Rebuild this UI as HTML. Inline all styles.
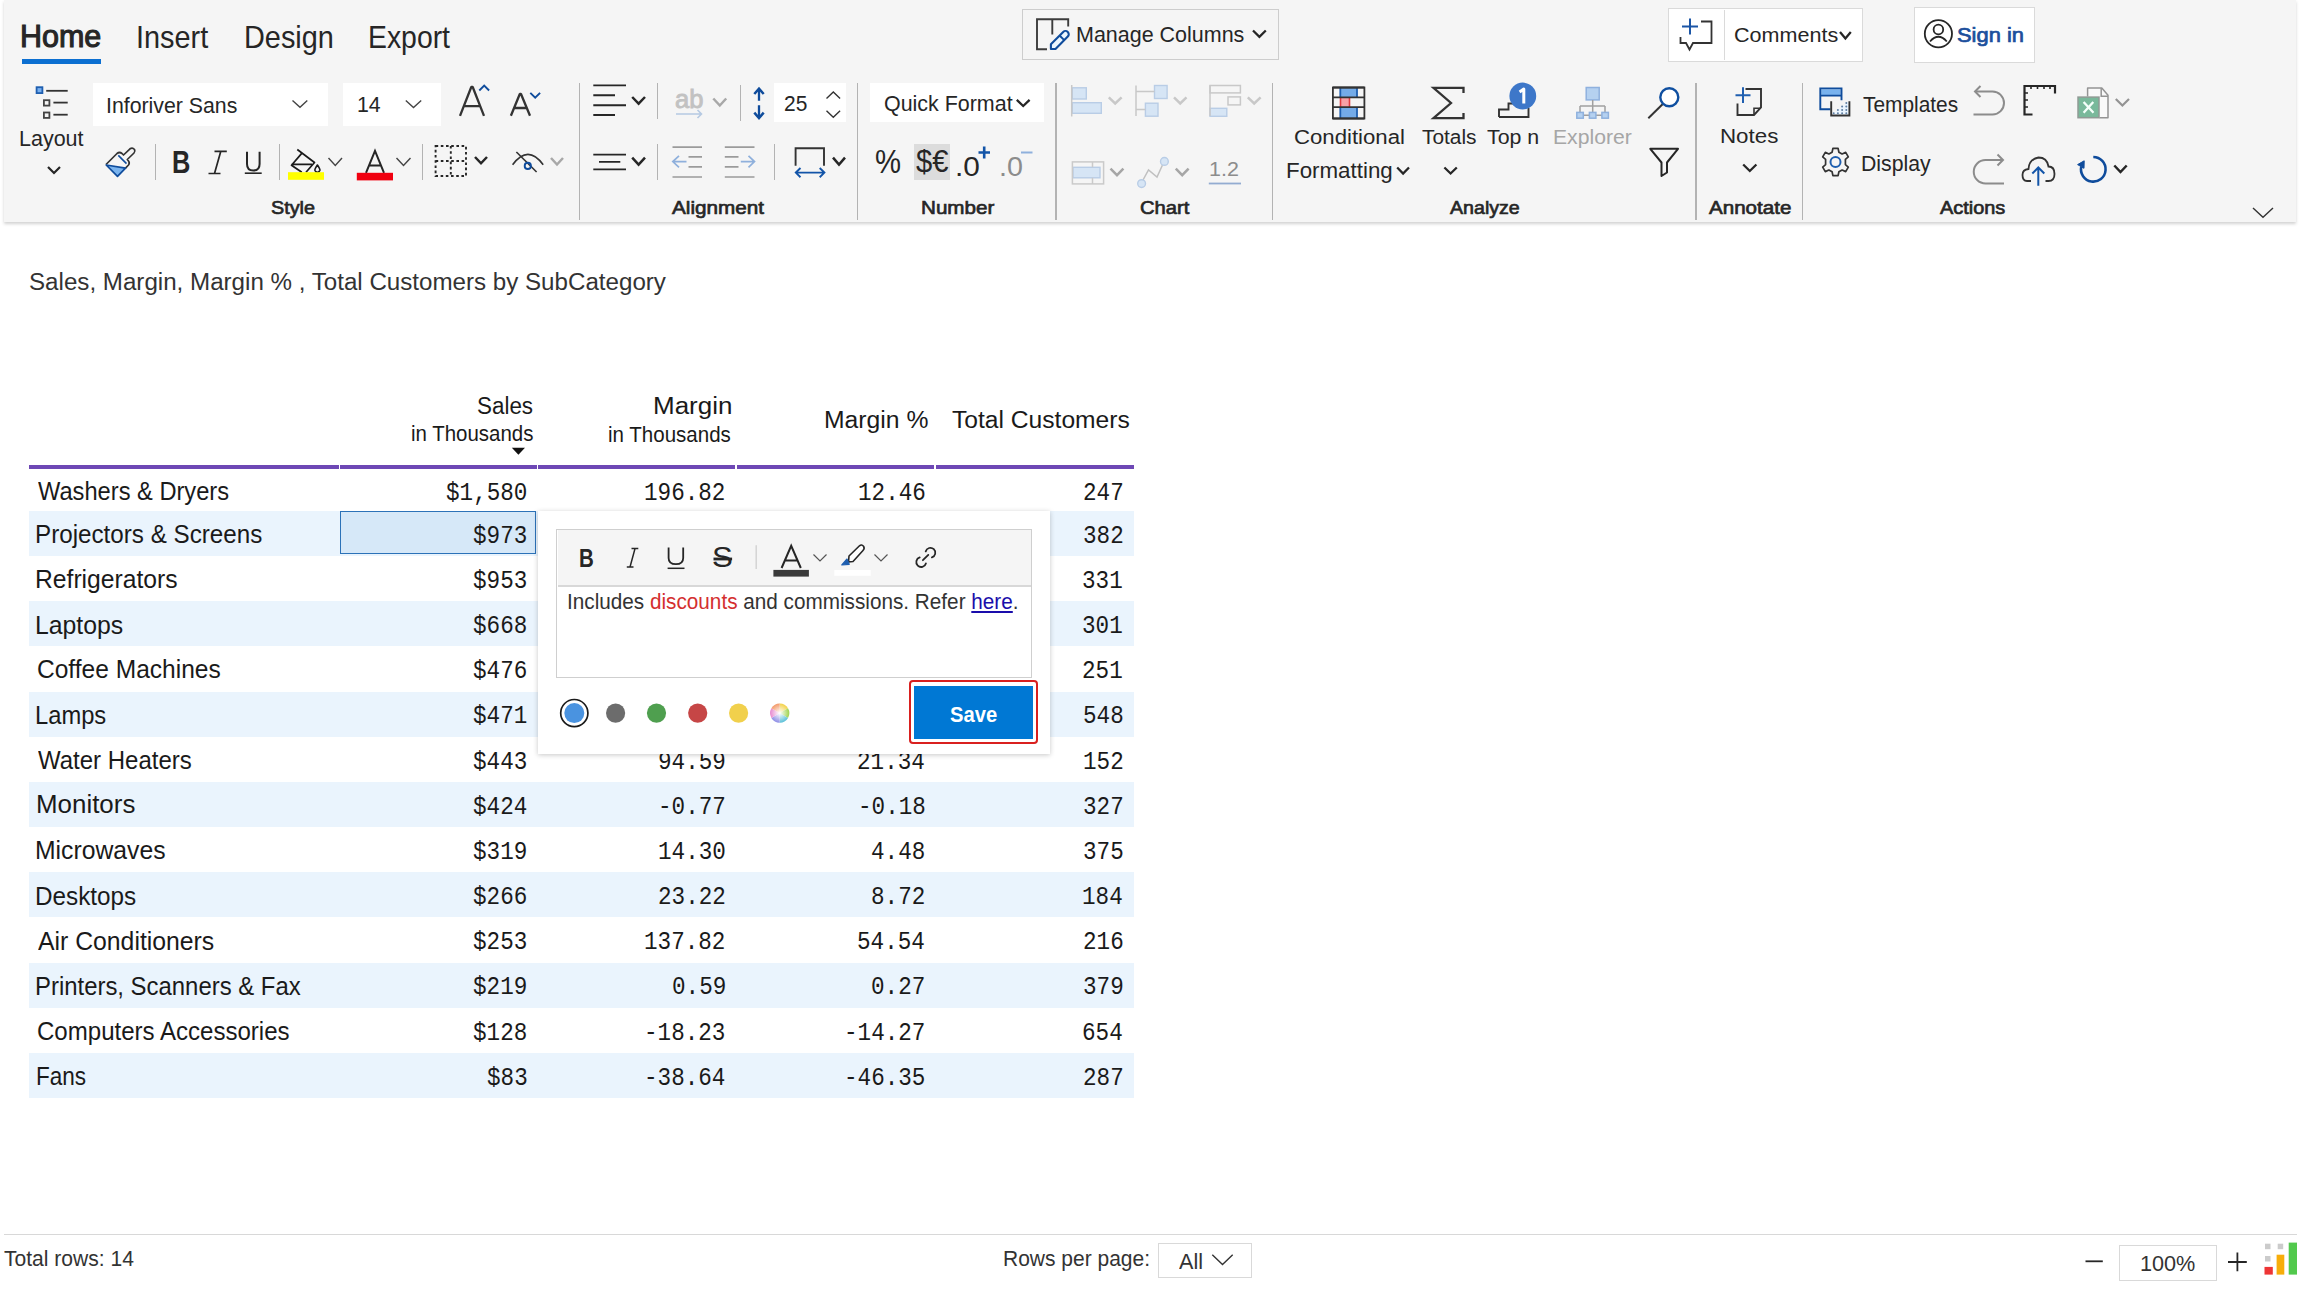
<!DOCTYPE html>
<html><head><meta charset="utf-8">
<style>
html,body{margin:0;padding:0;width:2304px;height:1289px;overflow:hidden;background:#fff;font-family:"Liberation Sans",sans-serif;}
.t{position:absolute;white-space:nowrap;line-height:1;transform-origin:0 0;}
.abs{position:absolute;}
#ribbon{position:absolute;left:4px;top:0;width:2292px;height:222px;background:#f5f5f5;box-shadow:0 2px 3px rgba(0,0,0,0.18);}
.sep{position:absolute;width:1.3px;background:#b3b3b3;}
.row{position:absolute;left:29px;width:1105px;height:45.17px;}
.alt{background:#eaf4fd;}
</style></head><body>
<div id="ribbon"></div>
<!-- tab underline -->
<div class="abs" style="left:22px;top:59px;width:79px;height:5px;background:#0c6fd1"></div>
<!-- top buttons -->
<div class="abs" style="left:1021.5px;top:9px;width:255px;height:48.5px;border:1.3px solid #cdcdcd;background:#f5f5f5"></div>
<div class="abs" style="left:1667.5px;top:8px;width:193px;height:51.5px;border:1.3px solid #dadada;background:#fff"></div>
<div class="abs" style="left:1723.5px;top:10px;width:1.3px;height:50px;background:#dadada"></div>
<div class="abs" style="left:1913.5px;top:6.8px;width:119.5px;height:54.5px;border:1.3px solid #dadada;background:#fff"></div>
<!-- input boxes -->
<div class="abs" style="left:93px;top:83px;width:235px;height:43px;background:#fff"></div>
<div class="abs" style="left:342.5px;top:83.2px;width:98.5px;height:42.4px;background:#fff"></div>
<div class="abs" style="left:774px;top:82.6px;width:71.6px;height:39px;background:#fff"></div>
<div class="abs" style="left:870px;top:83px;width:174.3px;height:39px;background:#fff"></div>
<div class="abs" style="left:914px;top:144.2px;width:36px;height:35.6px;background:#dcdcdc"></div>
<!-- separators -->
<div class="sep" style="left:578.8px;top:83px;height:137px"></div>
<div class="sep" style="left:856.9px;top:83px;height:137px"></div>
<div class="sep" style="left:1055.4px;top:83px;height:137px"></div>
<div class="sep" style="left:1272px;top:83px;height:137px"></div>
<div class="sep" style="left:1695.4px;top:83px;height:137px"></div>
<div class="sep" style="left:1802px;top:83px;height:137px"></div>
<div class="sep" style="left:154.7px;top:144px;height:36px"></div>
<div class="sep" style="left:278.7px;top:144px;height:36px"></div>
<div class="sep" style="left:421.9px;top:144px;height:36px"></div>
<div class="sep" style="left:656.8px;top:82.6px;height:36px"></div>
<div class="sep" style="left:739.9px;top:85px;height:36px"></div>
<div class="sep" style="left:656.8px;top:144px;height:36px"></div>
<div class="sep" style="left:773.6px;top:144px;height:36px"></div>
<!-- table rows -->
<div class="row alt" style="top:510.90px;height:45.17px"></div>
<div class="row alt" style="top:601.24px;height:45.17px"></div>
<div class="row alt" style="top:691.58px;height:45.17px"></div>
<div class="row alt" style="top:781.92px;height:45.17px"></div>
<div class="row alt" style="top:872.26px;height:45.17px"></div>
<div class="row alt" style="top:962.60px;height:45.17px"></div>
<div class="row alt" style="top:1052.94px;height:45.17px"></div>
<!-- purple header line -->
<div class="abs" style="left:29px;top:465.2px;width:309.5px;height:3.9px;background:#6e48b5"></div>
<div class="abs" style="left:339.8px;top:465.2px;width:196.8px;height:3.9px;background:#6e48b5"></div>
<div class="abs" style="left:538.2px;top:465.2px;width:196.8px;height:3.9px;background:#6e48b5"></div>
<div class="abs" style="left:736.9px;top:465.2px;width:197.3px;height:3.9px;background:#6e48b5"></div>
<div class="abs" style="left:935.8px;top:465.2px;width:198.2px;height:3.9px;background:#6e48b5"></div>
<!-- selected cell -->
<div class="abs" style="left:340.1px;top:511.2px;width:193.8px;height:41px;border:1.8px solid #2c72b8;background:#d6e8f8"></div>
<!-- sort triangle -->
<svg class="abs" style="left:0;top:0" width="2304" height="1289">
<polygon points="511.8,447.8 525,447.8 518.4,454.8" fill="#111"/>
</svg>
<div class="t" style="left:20.15px;top:21.36px;font-size:31.15px;transform:scaleX(0.9781);color:#262626;font-weight:400;font-family:'Liberation Sans';-webkit-text-stroke:1.09px #262626">Home</div>
<div class="t" style="left:135.97px;top:22.76px;font-size:30.72px;transform:scaleX(0.9397);color:#262626;font-weight:400;font-family:'Liberation Sans'">Insert</div>
<div class="t" style="left:243.74px;top:22.76px;font-size:30.72px;transform:scaleX(0.9399);color:#262626;font-weight:400;font-family:'Liberation Sans'">Design</div>
<div class="t" style="left:367.89px;top:22.76px;font-size:30.72px;transform:scaleX(0.9236);color:#262626;font-weight:400;font-family:'Liberation Sans'">Export</div>
<div class="t" style="left:1076.31px;top:23.95px;font-size:21.62px;transform:scaleX(0.9938);color:#262626;font-weight:400;font-family:'Liberation Sans'">Manage Columns</div>
<div class="t" style="left:1733.89px;top:24.03px;font-size:21.05px;transform:scaleX(1.0244);color:#262626;font-weight:400;font-family:'Liberation Sans'">Comments</div>
<div class="t" style="left:1957.32px;top:24.03px;font-size:21.05px;transform:scaleX(1.0397);color:#1c4f9c;font-weight:400;font-family:'Liberation Sans';-webkit-text-stroke:0.74px #1c4f9c">Sign in</div>
<div class="t" style="left:106.35px;top:94.89px;font-size:22.33px;transform:scaleX(0.9535);color:#262626;font-weight:400;font-family:'Liberation Sans'">Inforiver Sans</div>
<div class="t" style="left:356.92px;top:94.49px;font-size:21.62px;transform:scaleX(0.9857);color:#262626;font-weight:400;font-family:'Liberation Sans'">14</div>
<div class="t" style="left:19.43px;top:128.67px;font-size:21.33px;transform:scaleX(1.0072);color:#262626;font-weight:400;font-family:'Liberation Sans'">Layout</div>
<div class="t" style="left:271.38px;top:198.84px;font-size:18.49px;transform:scaleX(1.0702);color:#262626;font-weight:400;font-family:'Liberation Sans';-webkit-text-stroke:0.65px #262626">Style</div>
<div class="t" style="left:784.01px;top:92.99px;font-size:22.33px;transform:scaleX(0.9375);color:#262626;font-weight:400;font-family:'Liberation Sans'">25</div>
<div class="t" style="left:672.10px;top:198.84px;font-size:18.77px;transform:scaleX(1.1025);color:#262626;font-weight:400;font-family:'Liberation Sans';-webkit-text-stroke:0.66px #262626">Alignment</div>
<div class="t" style="left:884.12px;top:92.55px;font-size:21.19px;transform:scaleX(1.0114);color:#262626;font-weight:400;font-family:'Liberation Sans'">Quick Format</div>
<div class="t" style="left:920.73px;top:198.60px;font-size:18.77px;transform:scaleX(1.0987);color:#262626;font-weight:400;font-family:'Liberation Sans';-webkit-text-stroke:0.66px #262626">Number</div>
<div class="t" style="left:171.82px;top:147.42px;font-size:30.58px;transform:scaleX(0.8297);color:#262626;font-weight:700;font-family:'Liberation Sans'">B</div>
<div class="t" style="left:674.97px;top:86.69px;font-size:25.46px;transform:scaleX(1.0027);color:#c2c2c2;font-weight:400;font-family:'Liberation Sans';-webkit-text-stroke:0.89px #c2c2c2">ab</div>
<div class="t" style="left:875.08px;top:146.08px;font-size:32.57px;transform:scaleX(0.8985);color:#262626;font-weight:400;font-family:'Liberation Sans'">%</div>
<div class="t" style="left:915.76px;top:146.20px;font-size:31.72px;transform:scaleX(0.9198);color:#262626;font-weight:400;font-family:'Liberation Sans'">$€</div>
<div class="t" style="left:955.01px;top:151.58px;font-size:28.30px;transform:scaleX(1.0541);color:#262626;font-weight:400;font-family:'Liberation Sans'">.0</div>
<div class="t" style="left:998.98px;top:151.58px;font-size:28.30px;transform:scaleX(1.0145);color:#8c8c8c;font-weight:400;font-family:'Liberation Sans'">.0</div>
<div class="t" style="left:1209.12px;top:158.47px;font-size:21.05px;transform:scaleX(1.0193);color:#8c8c8c;font-weight:400;font-family:'Liberation Sans'">1.2</div>
<div class="t" style="left:1139.50px;top:198.60px;font-size:18.77px;transform:scaleX(1.0771);color:#262626;font-weight:400;font-family:'Liberation Sans';-webkit-text-stroke:0.66px #262626">Chart</div>
<div class="t" style="left:1293.64px;top:126.25px;font-size:21.05px;transform:scaleX(1.0534);color:#262626;font-weight:400;font-family:'Liberation Sans'">Conditional</div>
<div class="t" style="left:1286.27px;top:159.57px;font-size:22.04px;transform:scaleX(1.0138);color:#262626;font-weight:400;font-family:'Liberation Sans'">Formatting</div>
<div class="t" style="left:1421.67px;top:126.25px;font-size:21.05px;transform:scaleX(0.9920);color:#262626;font-weight:400;font-family:'Liberation Sans'">Totals</div>
<div class="t" style="left:1487.23px;top:126.25px;font-size:21.05px;transform:scaleX(1.0136);color:#262626;font-weight:400;font-family:'Liberation Sans'">Top n</div>
<div class="t" style="left:1553.35px;top:126.25px;font-size:21.05px;transform:scaleX(1.0048);color:#a6a6a6;font-weight:400;font-family:'Liberation Sans'">Explorer</div>
<div class="t" style="left:1450.00px;top:198.84px;font-size:18.77px;transform:scaleX(1.0450);color:#262626;font-weight:400;font-family:'Liberation Sans';-webkit-text-stroke:0.66px #262626">Analyze</div>
<div class="t" style="left:1720.37px;top:125.91px;font-size:20.34px;transform:scaleX(1.0983);color:#262626;font-weight:400;font-family:'Liberation Sans'">Notes</div>
<div class="t" style="left:1708.66px;top:198.84px;font-size:18.49px;transform:scaleX(1.1130);color:#262626;font-weight:400;font-family:'Liberation Sans';-webkit-text-stroke:0.65px #262626">Annotate</div>
<div class="t" style="left:1862.57px;top:93.67px;font-size:22.33px;transform:scaleX(0.9343);color:#262626;font-weight:400;font-family:'Liberation Sans'">Templates</div>
<div class="t" style="left:1861.34px;top:152.89px;font-size:22.33px;transform:scaleX(0.9515);color:#262626;font-weight:400;font-family:'Liberation Sans'">Display</div>
<div class="t" style="left:1940.44px;top:198.84px;font-size:18.49px;transform:scaleX(1.0767);color:#262626;font-weight:400;font-family:'Liberation Sans';-webkit-text-stroke:0.65px #262626">Actions</div>
<div class="t" style="left:29.13px;top:271.25px;font-size:23.18px;transform:scaleX(1.0419);color:#333333;font-weight:400;font-family:'Liberation Sans'">Sales, Margin, Margin % , Total Customers by SubCategory</div>
<div class="t" style="left:476.85px;top:394.59px;font-size:23.18px;transform:scaleX(0.9671);color:#1a1a1a;font-weight:400;font-family:'Liberation Sans'">Sales</div>
<div class="t" style="left:410.63px;top:423.21px;font-size:21.76px;transform:scaleX(0.9401);color:#1a1a1a;font-weight:400;font-family:'Liberation Sans'">in Thousands</div>
<div class="t" style="left:652.98px;top:393.97px;font-size:24.75px;transform:scaleX(1.0496);color:#1a1a1a;font-weight:400;font-family:'Liberation Sans'">Margin</div>
<div class="t" style="left:608.28px;top:424.31px;font-size:21.76px;transform:scaleX(0.9435);color:#1a1a1a;font-weight:400;font-family:'Liberation Sans'">in Thousands</div>
<div class="t" style="left:824.17px;top:407.89px;font-size:24.46px;transform:scaleX(1.0110);color:#1a1a1a;font-weight:400;font-family:'Liberation Sans'">Margin %</div>
<div class="t" style="left:951.72px;top:407.89px;font-size:24.46px;transform:scaleX(1.0064);color:#1a1a1a;font-weight:400;font-family:'Liberation Sans'">Total Customers</div>
<div class="t" style="left:38.12px;top:478.98px;font-size:24.89px;transform:scaleX(0.9512);color:#1a1a1a;font-weight:400;font-family:'Liberation Sans'">Washers &amp; Dryers</div>
<div class="t" style="left:35.43px;top:522.18px;font-size:24.89px;transform:scaleX(0.9729);color:#1a1a1a;font-weight:400;font-family:'Liberation Sans'">Projectors &amp; Screens</div>
<div class="t" style="left:35.39px;top:566.96px;font-size:24.89px;transform:scaleX(0.9920);color:#1a1a1a;font-weight:400;font-family:'Liberation Sans'">Refrigerators</div>
<div class="t" style="left:35.39px;top:612.53px;font-size:24.89px;transform:scaleX(0.9967);color:#1a1a1a;font-weight:400;font-family:'Liberation Sans'">Laptops</div>
<div class="t" style="left:36.97px;top:657.31px;font-size:24.89px;transform:scaleX(0.9866);color:#1a1a1a;font-weight:400;font-family:'Liberation Sans'">Coffee Machines</div>
<div class="t" style="left:35.46px;top:702.89px;font-size:24.89px;transform:scaleX(0.9539);color:#1a1a1a;font-weight:400;font-family:'Liberation Sans'">Lamps</div>
<div class="t" style="left:38.12px;top:748.27px;font-size:24.89px;transform:scaleX(0.9646);color:#1a1a1a;font-weight:400;font-family:'Liberation Sans'">Water Heaters</div>
<div class="t" style="left:36.10px;top:792.45px;font-size:24.89px;transform:scaleX(1.0415);color:#1a1a1a;font-weight:400;font-family:'Liberation Sans'">Monitors</div>
<div class="t" style="left:35.39px;top:838.02px;font-size:24.89px;transform:scaleX(0.9941);color:#1a1a1a;font-weight:400;font-family:'Liberation Sans'">Microwaves</div>
<div class="t" style="left:35.43px;top:883.60px;font-size:24.89px;transform:scaleX(0.9756);color:#1a1a1a;font-weight:400;font-family:'Liberation Sans'">Desktops</div>
<div class="t" style="left:38.12px;top:928.58px;font-size:24.89px;transform:scaleX(0.9959);color:#1a1a1a;font-weight:400;font-family:'Liberation Sans'">Air Conditioners</div>
<div class="t" style="left:35.46px;top:973.96px;font-size:24.89px;transform:scaleX(0.9608);color:#1a1a1a;font-weight:400;font-family:'Liberation Sans'">Printers, Scanners &amp; Fax</div>
<div class="t" style="left:37.00px;top:1018.74px;font-size:24.89px;transform:scaleX(0.9667);color:#1a1a1a;font-weight:400;font-family:'Liberation Sans'">Computers Accessories</div>
<div class="t" style="left:35.58px;top:1063.51px;font-size:24.89px;transform:scaleX(0.9064);color:#1a1a1a;font-weight:400;font-family:'Liberation Sans'">Fans</div>
<div class="t" style="left:4.35px;top:1248.01px;font-size:22.19px;transform:scaleX(0.9494);color:#333333;font-weight:400;font-family:'Liberation Sans'">Total rows: 14</div>
<div class="t" style="left:1002.80px;top:1248.27px;font-size:21.76px;transform:scaleX(0.9652);color:#333333;font-weight:400;font-family:'Liberation Sans'">Rows per page:</div>
<div class="t" style="left:1178.56px;top:1251.29px;font-size:21.62px;transform:scaleX(0.9989);color:#333333;font-weight:400;font-family:'Liberation Sans'">All</div>
<div class="t" style="left:2140.31px;top:1251.59px;font-size:22.76px;transform:scaleX(0.9514);color:#333333;font-weight:400;font-family:'Liberation Sans'">100%</div>
<div class="t" style="left:445.79px;top:479.72px;font-size:26.05px;transform:scaleX(0.8681);color:#1a1a1a;font-weight:400;font-family:'Liberation Mono'">$1,580</div>
<div class="t" style="left:644.45px;top:479.72px;font-size:26.05px;transform:scaleX(0.8681);color:#1a1a1a;font-weight:400;font-family:'Liberation Mono'">196.82</div>
<div class="t" style="left:857.56px;top:479.72px;font-size:26.05px;transform:scaleX(0.8681);color:#1a1a1a;font-weight:400;font-family:'Liberation Mono'">12.46</div>
<div class="t" style="left:1082.85px;top:479.72px;font-size:26.05px;transform:scaleX(0.8681);color:#1a1a1a;font-weight:400;font-family:'Liberation Mono'">247</div>
<div class="t" style="left:472.93px;top:522.72px;font-size:26.05px;transform:scaleX(0.8681);color:#1a1a1a;font-weight:400;font-family:'Liberation Mono'">$973</div>
<div class="t" style="left:1082.85px;top:522.72px;font-size:26.05px;transform:scaleX(0.8681);color:#1a1a1a;font-weight:400;font-family:'Liberation Mono'">382</div>
<div class="t" style="left:472.93px;top:567.89px;font-size:26.05px;transform:scaleX(0.8681);color:#1a1a1a;font-weight:400;font-family:'Liberation Mono'">$953</div>
<div class="t" style="left:1082.15px;top:567.89px;font-size:26.05px;transform:scaleX(0.8681);color:#1a1a1a;font-weight:400;font-family:'Liberation Mono'">331</div>
<div class="t" style="left:472.93px;top:613.06px;font-size:26.05px;transform:scaleX(0.8681);color:#1a1a1a;font-weight:400;font-family:'Liberation Mono'">$668</div>
<div class="t" style="left:1082.15px;top:613.06px;font-size:26.05px;transform:scaleX(0.8681);color:#1a1a1a;font-weight:400;font-family:'Liberation Mono'">301</div>
<div class="t" style="left:472.93px;top:658.23px;font-size:26.05px;transform:scaleX(0.8681);color:#1a1a1a;font-weight:400;font-family:'Liberation Mono'">$476</div>
<div class="t" style="left:1082.15px;top:658.23px;font-size:26.05px;transform:scaleX(0.8681);color:#1a1a1a;font-weight:400;font-family:'Liberation Mono'">251</div>
<div class="t" style="left:472.58px;top:703.40px;font-size:26.05px;transform:scaleX(0.8681);color:#1a1a1a;font-weight:400;font-family:'Liberation Mono'">$471</div>
<div class="t" style="left:1082.50px;top:703.40px;font-size:26.05px;transform:scaleX(0.8681);color:#1a1a1a;font-weight:400;font-family:'Liberation Mono'">548</div>
<div class="t" style="left:472.93px;top:748.57px;font-size:26.05px;transform:scaleX(0.8681);color:#1a1a1a;font-weight:400;font-family:'Liberation Mono'">$443</div>
<div class="t" style="left:658.02px;top:748.57px;font-size:26.05px;transform:scaleX(0.8681);color:#1a1a1a;font-weight:400;font-family:'Liberation Mono'">94.59</div>
<div class="t" style="left:857.21px;top:748.57px;font-size:26.05px;transform:scaleX(0.8681);color:#1a1a1a;font-weight:400;font-family:'Liberation Mono'">21.34</div>
<div class="t" style="left:1082.85px;top:748.57px;font-size:26.05px;transform:scaleX(0.8681);color:#1a1a1a;font-weight:400;font-family:'Liberation Mono'">152</div>
<div class="t" style="left:472.58px;top:793.74px;font-size:26.05px;transform:scaleX(0.8681);color:#1a1a1a;font-weight:400;font-family:'Liberation Mono'">$424</div>
<div class="t" style="left:658.02px;top:793.74px;font-size:26.05px;transform:scaleX(0.8681);color:#1a1a1a;font-weight:400;font-family:'Liberation Mono'">-0.77</div>
<div class="t" style="left:857.56px;top:793.74px;font-size:26.05px;transform:scaleX(0.8681);color:#1a1a1a;font-weight:400;font-family:'Liberation Mono'">-0.18</div>
<div class="t" style="left:1082.85px;top:793.74px;font-size:26.05px;transform:scaleX(0.8681);color:#1a1a1a;font-weight:400;font-family:'Liberation Mono'">327</div>
<div class="t" style="left:473.28px;top:838.91px;font-size:26.05px;transform:scaleX(0.8681);color:#1a1a1a;font-weight:400;font-family:'Liberation Mono'">$319</div>
<div class="t" style="left:657.66px;top:838.91px;font-size:26.05px;transform:scaleX(0.8681);color:#1a1a1a;font-weight:400;font-family:'Liberation Mono'">14.30</div>
<div class="t" style="left:871.13px;top:838.91px;font-size:26.05px;transform:scaleX(0.8681);color:#1a1a1a;font-weight:400;font-family:'Liberation Mono'">4.48</div>
<div class="t" style="left:1082.50px;top:838.91px;font-size:26.05px;transform:scaleX(0.8681);color:#1a1a1a;font-weight:400;font-family:'Liberation Mono'">375</div>
<div class="t" style="left:472.93px;top:884.08px;font-size:26.05px;transform:scaleX(0.8681);color:#1a1a1a;font-weight:400;font-family:'Liberation Mono'">$266</div>
<div class="t" style="left:658.02px;top:884.08px;font-size:26.05px;transform:scaleX(0.8681);color:#1a1a1a;font-weight:400;font-family:'Liberation Mono'">23.22</div>
<div class="t" style="left:871.48px;top:884.08px;font-size:26.05px;transform:scaleX(0.8681);color:#1a1a1a;font-weight:400;font-family:'Liberation Mono'">8.72</div>
<div class="t" style="left:1082.15px;top:884.08px;font-size:26.05px;transform:scaleX(0.8681);color:#1a1a1a;font-weight:400;font-family:'Liberation Mono'">184</div>
<div class="t" style="left:472.93px;top:929.25px;font-size:26.05px;transform:scaleX(0.8681);color:#1a1a1a;font-weight:400;font-family:'Liberation Mono'">$253</div>
<div class="t" style="left:644.45px;top:929.25px;font-size:26.05px;transform:scaleX(0.8681);color:#1a1a1a;font-weight:400;font-family:'Liberation Mono'">137.82</div>
<div class="t" style="left:857.21px;top:929.25px;font-size:26.05px;transform:scaleX(0.8681);color:#1a1a1a;font-weight:400;font-family:'Liberation Mono'">54.54</div>
<div class="t" style="left:1082.50px;top:929.25px;font-size:26.05px;transform:scaleX(0.8681);color:#1a1a1a;font-weight:400;font-family:'Liberation Mono'">216</div>
<div class="t" style="left:473.28px;top:974.42px;font-size:26.05px;transform:scaleX(0.8681);color:#1a1a1a;font-weight:400;font-family:'Liberation Mono'">$219</div>
<div class="t" style="left:671.58px;top:974.42px;font-size:26.05px;transform:scaleX(0.8681);color:#1a1a1a;font-weight:400;font-family:'Liberation Mono'">0.59</div>
<div class="t" style="left:871.48px;top:974.42px;font-size:26.05px;transform:scaleX(0.8681);color:#1a1a1a;font-weight:400;font-family:'Liberation Mono'">0.27</div>
<div class="t" style="left:1082.85px;top:974.42px;font-size:26.05px;transform:scaleX(0.8681);color:#1a1a1a;font-weight:400;font-family:'Liberation Mono'">379</div>
<div class="t" style="left:472.93px;top:1019.59px;font-size:26.05px;transform:scaleX(0.8681);color:#1a1a1a;font-weight:400;font-family:'Liberation Mono'">$128</div>
<div class="t" style="left:644.09px;top:1019.59px;font-size:26.05px;transform:scaleX(0.8681);color:#1a1a1a;font-weight:400;font-family:'Liberation Mono'">-18.23</div>
<div class="t" style="left:844.35px;top:1019.59px;font-size:26.05px;transform:scaleX(0.8681);color:#1a1a1a;font-weight:400;font-family:'Liberation Mono'">-14.27</div>
<div class="t" style="left:1082.15px;top:1019.59px;font-size:26.05px;transform:scaleX(0.8681);color:#1a1a1a;font-weight:400;font-family:'Liberation Mono'">654</div>
<div class="t" style="left:486.50px;top:1064.76px;font-size:26.05px;transform:scaleX(0.8681);color:#1a1a1a;font-weight:400;font-family:'Liberation Mono'">$83</div>
<div class="t" style="left:643.74px;top:1064.76px;font-size:26.05px;transform:scaleX(0.8681);color:#1a1a1a;font-weight:400;font-family:'Liberation Mono'">-38.64</div>
<div class="t" style="left:843.99px;top:1064.76px;font-size:26.05px;transform:scaleX(0.8681);color:#1a1a1a;font-weight:400;font-family:'Liberation Mono'">-46.35</div>
<div class="t" style="left:1082.85px;top:1064.76px;font-size:26.05px;transform:scaleX(0.8681);color:#1a1a1a;font-weight:400;font-family:'Liberation Mono'">287</div>
<!-- popup -->
<div class="abs" style="left:538px;top:510.8px;width:511.6px;height:243.3px;background:#fff;box-shadow:0 1px 5px rgba(0,0,0,0.22)"></div>
<div class="abs" style="left:556.4px;top:529px;width:474px;height:146.5px;border:1.3px solid #cfcfcf;background:#fff"></div>
<div class="abs" style="left:557.7px;top:530.3px;width:473px;height:55px;background:#f5f5f5;border-bottom:2.2px solid #d8d8d8"></div>
<div class="abs" style="left:909.4px;top:680.3px;width:124.6px;height:60px;border:2px solid #d9201f;border-radius:4px"></div>
<div class="abs" style="left:914.3px;top:685.7px;width:118.4px;height:53.8px;background:#0078d4"></div>
<div class="t p" style="left:567.38px;top:591.45px;font-size:22.19px;transform:scaleX(0.9340);color:#333333;font-weight:400;font-family:'Liberation Sans'">Includes <span style="color:#d42f2f">discounts</span> and commissions. Refer <span style="color:#1a0dab;text-decoration:underline">here</span>.</div>
<div class="t p" style="left:949.89px;top:704.05px;font-size:21.76px;transform:scaleX(0.9287);color:#ffffff;font-weight:700;font-family:'Liberation Sans'">Save</div>
<div class="t p" style="left:578.63px;top:545.75px;font-size:25.32px;transform:scaleX(0.8094);color:#262626;font-weight:700;font-family:'Liberation Sans'">B</div>
<div class="t p" style="left:712.26px;top:543.26px;font-size:28.87px;transform:scaleX(1.0788);color:#262626;font-weight:400;font-family:'Liberation Sans'">S</div>
<!-- footer -->
<div class="abs" style="left:4px;top:1233.8px;width:2293px;height:1.6px;background:#d8d8d8"></div>
<div class="abs" style="left:1158.3px;top:1243.2px;width:91.6px;height:32.7px;border:1.3px solid #d9d9d9"></div>
<div class="abs" style="left:2119.2px;top:1245.1px;width:95.8px;height:33.5px;border:1.3px solid #d9d9d9"></div>
<svg class="abs" style="left:0;top:0;pointer-events:none" width="2304" height="1289" viewBox="0 0 2304 1289" fill="none" stroke-linecap="butt">
<!-- ===== Top buttons ===== -->
<!-- manage columns icon -->
<path d="M1047,49.2 H1037 V19.2 H1068.2 V26.5" stroke="#3c3c3c" stroke-width="1.9"/>
<path d="M1052.3,19.2 V34.5" stroke="#3c3c3c" stroke-width="1.9"/>
<path d="M1050.9,49 V44.2 L1063.2,31.9 A3.25 3.25 0 0 1 1067.8,36.5 L1055.5,49 Z" fill="#eaf6ff" stroke="#0f4c9c" stroke-width="2.1" stroke-linejoin="round"/>
<path d="M1059.6,35.5 L1064.2,40.1" stroke="#0f4c9c" stroke-width="1.9"/>
<polyline points="1253,30.5 1259.4,36.8 1265.8,30.5" stroke="#262626" stroke-width="2.3"/>
<!-- comments icon -->
<path d="M1682,26.5 H1698 M1690,18.6 V34.5" stroke="#1b55a6" stroke-width="2"/>
<path d="M1701,21.5 H1711.5 V43 H1693 L1689.5,49.5 L1686,43 H1680.5 V37" stroke="#333" stroke-width="1.8"/>
<polyline points="1840,32 1845.4,38.4 1850.8,32" stroke="#262626" stroke-width="2.3"/>
<!-- user icon -->
<circle cx="1938.4" cy="33.8" r="13.6" stroke="#262626" stroke-width="1.8"/>
<circle cx="1938.4" cy="29.5" r="4.8" stroke="#262626" stroke-width="1.8"/>
<path d="M1930,41.5 Q1938.4,32 1946.8,41.5" stroke="#262626" stroke-width="1.8"/>

<!-- ===== Style group ===== -->
<rect x="36.6" y="87.2" width="5.8" height="5.9" fill="#76aff0" stroke="#1f5fb0" stroke-width="1.8"/>
<path d="M46.2,90.8 H67.7" stroke="#333" stroke-width="1.8"/>
<rect x="43.9" y="100.2" width="5.5" height="5.4" stroke="#444" stroke-width="1.8"/>
<path d="M53.4,102.6 H67.7" stroke="#333" stroke-width="1.8"/>
<rect x="43.9" y="112.5" width="5.5" height="5.4" stroke="#444" stroke-width="1.8"/>
<path d="M53.4,114.7 H67.7" stroke="#333" stroke-width="1.8"/>
<polyline points="48,167 54,173 60,167" stroke="#262626" stroke-width="2.2"/>
<!-- brush -->
<g stroke-linejoin="round">
<path d="M106,164.5 L117,153.5 Q119.5,151.5 122,153.5 L123.5,155 L130,148.8 Q132.5,147 134.5,149.5 Q135.5,151.5 134,153 L127.3,159.5 L128.5,161 Q130,163 128.5,165 L125.5,168.2" stroke="#333" stroke-width="1.7"/>
<path d="M106.2,165 L125.5,168.2 L117.5,176.3 Z" fill="#79b3ee" stroke="#0f4c9c" stroke-width="1.7"/>
<path d="M118.3,155.4 L126.5,163.6" stroke="#0f4c9c" stroke-width="1.6"/>
</g>
<!-- B I U -->
<path d="M208.5,173.5 H220.5 M214.5,151.3 H226.8 M220.8,151.3 L214.5,173.5" stroke="#262626" stroke-width="1.7"/>
<path d="M247,151.8 V164 Q247,170.5 253.3,170.5 Q259.6,170.5 259.6,164 V151.8" stroke="#262626" stroke-width="2"/>
<path d="M244.8,173.2 H261.7" stroke="#262626" stroke-width="1.6"/>
<!-- fill bucket -->
<g stroke="#1a1a1a" stroke-width="1.7" stroke-linejoin="round">
<path d="M297.3,149.5 L314.5,162.5 L306,172.3 M301.5,153.6 L291.5,165.3 L301.8,172.3 M291.5,164.4 H312" />
<path d="M317.4,165 Q314.6,169 314.9,170.3 Q315.5,172.3 317.4,172.3 Q319.3,172.3 319.9,170.3 Q320.2,169 317.4,165 Z" stroke-width="1.6"/>
</g>
<rect x="288" y="172.2" width="36" height="7.6" fill="#ffff00"/>
<polyline points="328.5,158 335.3,165.5 342,158" stroke="#444" stroke-width="1.4"/>
<!-- font color A -->
<path d="M366,172.8 L375,150.8 L384,172.8 M368.8,165.5 H381.2" stroke="#262626" stroke-width="2"/>
<rect x="356.8" y="172.8" width="36.2" height="7.6" fill="#f00010"/>
<polyline points="396.5,158 403.5,165.5 410.5,158" stroke="#444" stroke-width="1.4"/>
<!-- dotted borders -->
<rect x="435.6" y="146" width="30.4" height="30" stroke="#262626" stroke-width="1.9" stroke-dasharray="2.6,2.6"/>
<path d="M450.8,146 V176 M435.6,161 H466" stroke="#262626" stroke-width="1.9" stroke-dasharray="2.6,2.6"/>
<polyline points="475,157 481,163.3 487,157" stroke="#262626" stroke-width="2.5"/>
<!-- eye hidden -->
<path d="M512.6,164.8 Q528,144 543.2,164.8" stroke="#333" stroke-width="1.6"/>
<path d="M516.4,152 L536.6,172" stroke="#333" stroke-width="1.6"/>
<circle cx="527.8" cy="165.9" r="3.1" stroke="#0f4c9c" stroke-width="1.9"/>
<polyline points="551,158 557,164.5 563,158" stroke="#a8a8a8" stroke-width="2.5"/>
<!-- font dropdown chevrons -->
<polyline points="292.5,100.5 300,107.3 307.3,100.5" stroke="#444" stroke-width="1.4"/>
<polyline points="405.8,100.5 413.5,107.5 421.2,100.5" stroke="#444" stroke-width="1.4"/>
<!-- grow/shrink A -->
<path d="M460,115.8 L471.3,87 H472.7 L484,115.8 M464,106.2 H480" stroke="#333" stroke-width="2.3" stroke-linejoin="bevel"/>
<polyline points="479.3,90.5 484.2,85.6 489.1,90.5" stroke="#0f4c9c" stroke-width="1.9"/>
<path d="M510.9,115.8 L519.8,94 H521 L530,115.8 M514.2,108 H526.8" stroke="#333" stroke-width="2.3" stroke-linejoin="bevel"/>
<polyline points="530.3,92.8 535.2,97.7 540.1,92.8" stroke="#0f4c9c" stroke-width="1.9"/>

<!-- ===== Alignment group ===== -->
<path d="M593.3,85.4 H626 M593.3,95.2 H615 M593.3,105.2 H626 M593.3,115 H615" stroke="#262626" stroke-width="1.9"/>
<polyline points="632.2,97 638.6,103.6 645,97" stroke="#262626" stroke-width="2.5"/>
<path d="M676,114 H701.5 M697.5,110 L701.5,114 L697.5,118" stroke="#b5c9e2" stroke-width="1.6"/>
<polyline points="713.3,98.5 719.8,105.5 726.2,98.5" stroke="#a8a8a8" stroke-width="2.5"/>
<path d="M759,89 V100.8 M759,105.2 V117.5" stroke="#0f4c9c" stroke-width="2.3"/>
<polyline points="754.3,94 759,88.6 763.7,94" stroke="#0f4c9c" stroke-width="2.5"/>
<polyline points="754.3,112.6 759,118 763.7,112.6" stroke="#0f4c9c" stroke-width="2.5"/>
<polyline points="826.5,98.5 833.3,92 840.1,98.5" stroke="#333" stroke-width="1.4"/>
<polyline points="826.5,110.8 833.3,117.3 840.1,110.8" stroke="#333" stroke-width="1.4"/>
<path d="M593.3,154.6 H626 M599,161.9 H620.3 M593.3,169.4 H626" stroke="#262626" stroke-width="1.9"/>
<polyline points="632.2,157.6 638.6,164.6 645,157.6" stroke="#262626" stroke-width="2.5"/>
<!-- indent icons -->
<path d="M672.5,147.2 H702 M688.5,156.8 H702 M688.5,166.9 H702 M672.5,177 H702" stroke="#9b9b9b" stroke-width="1.7"/>
<path d="M672.8,161.6 H686.5 M679,155.8 L672.8,161.6 L679,167.4" stroke="#8fb0dc" stroke-width="1.7"/>
<path d="M724.8,147.2 H754.5 M724.8,156.8 H738.5 M724.8,166.9 H738.5 M724.8,177 H754.5" stroke="#9b9b9b" stroke-width="1.7"/>
<path d="M740.8,161.6 H754.5 M748.5,155.8 L754.5,161.6 L748.5,167.4" stroke="#8fb0dc" stroke-width="1.7"/>
<!-- column width -->
<path d="M795.6,165.7 V148.3 H824 V165.7" stroke="#333" stroke-width="1.9"/>
<path d="M796,172.6 H824.2 M800.5,168 L795.8,172.6 L800.5,177.2 M819.7,168 L824.4,172.6 L819.7,177.2" stroke="#1254a8" stroke-width="1.9"/>
<polyline points="833,157.6 839,164.6 845,157.6" stroke="#262626" stroke-width="2.5"/>

<!-- ===== Number group ===== -->
<polyline points="1016.8,99.8 1023.2,106 1029.6,99.8" stroke="#262626" stroke-width="2.3"/>
<path d="M978.5,152.5 H990 M984.2,146.5 V158.5" stroke="#1254a8" stroke-width="2.6"/>
<path d="M1021,152.5 H1032.5" stroke="#8fb0dc" stroke-width="2"/>

<!-- ===== Chart group ===== -->
<g stroke="#b9cde6" stroke-width="1.4" fill="#d6e5f5">
<rect x="1072.3" y="87.8" width="14" height="11.2"/>
<rect x="1072.3" y="102.7" width="29" height="10.6"/>
<rect x="1154.5" y="85.5" width="12.6" height="13"/>
<rect x="1145.4" y="103.2" width="12.6" height="13"/>
<rect x="1210" y="108.3" width="16.8" height="8"/>
<rect x="1073" y="167.3" width="27" height="10.5"/>
</g>
<path d="M1071.7,85 V116.5" stroke="#c8c8c8" stroke-width="1.5"/>
<path d="M1136,85.5 V116 M1136,91.6 H1154.5 M1136,109.6 H1145.4" stroke="#c8c8c8" stroke-width="1.5"/>
<rect x="1210" y="85.5" width="30.4" height="7.4" stroke="#c8c8c8" stroke-width="1.5"/>
<rect x="1228" y="96.9" width="12.4" height="8" stroke="#c8c8c8" stroke-width="1.5"/>
<path d="M1210,85.5 V116" stroke="#c8c8c8" stroke-width="1.5"/>
<rect x="1072.4" y="161.9" width="31.2" height="22" stroke="#cacaca" stroke-width="1.5"/>
<path d="M1092.5,161.9 V167.3 M1092.5,177.8 V183.9" stroke="#cacaca" stroke-width="1.5"/>
<polyline points="1143,180 1148.5,170 1157,177 1162.5,165" stroke="#c0c0c0" stroke-width="1.5"/>
<circle cx="1141.6" cy="183.6" r="3.9" fill="#d6e5f5" stroke="#b9cde6" stroke-width="1.4"/>
<circle cx="1164.4" cy="161.4" r="3.9" fill="#d6e5f5" stroke="#b9cde6" stroke-width="1.4"/>
<g stroke="#c8c8c8" stroke-width="2.5">
<polyline points="1108.8,97.3 1115.2,103.5 1121.6,97.3"/>
<polyline points="1174,97.3 1180.2,103.5 1186.5,97.3"/>
<polyline points="1247.8,97.3 1254.2,103.5 1260.6,97.3"/>
</g>
<g stroke="#a6a6a6" stroke-width="2.5">
<polyline points="1110.5,168.6 1117,175.2 1123.4,168.6"/>
<polyline points="1175.8,168.6 1182.2,175.2 1188.6,168.6"/>
</g>
<rect x="1208.8" y="182.6" width="32.2" height="1.8" fill="#93acd1"/>

<!-- ===== Analyze group ===== -->
<rect x="1340.5" y="87.5" width="16.5" height="9.8" fill="#74abe8"/>
<rect x="1340.5" y="107.2" width="16.5" height="11.3" fill="#74abe8"/>
<rect x="1340.5" y="97.3" width="9" height="9.9" fill="#f7a1a7"/>
<path d="M1340.5,97.3 V107.2 M1349.5,97.3 V107.2" stroke="#e03a40" stroke-width="1.6"/>
<path d="M1340.3,87.5 V97.3 M1357,87.5 V97.3 M1340.3,107.2 V118.5 M1357,107.2 V118.5" stroke="#1f5fb0" stroke-width="1.8"/>
<rect x="1332.9" y="87.5" width="31.5" height="31" stroke="#333" stroke-width="1.8"/>
<path d="M1332.9,97.3 H1364.4 M1332.9,107.2 H1364.4" stroke="#333" stroke-width="1.8"/>
<path d="M1332.9,87.5 H1364.4 M1332.9,118.5 H1364.4" stroke="#333" stroke-width="1.8"/>
<polyline points="1397.2,167.5 1403.1,173.5 1409,167.5" stroke="#262626" stroke-width="2.3"/>
<path d="M1463.5,93 V87.8 H1433.5 L1451,103 L1433.5,118.2 H1463.5 V113" stroke="#333" stroke-width="2.3" stroke-linejoin="miter"/>
<polyline points="1444.4,167.5 1450.6,173.5 1456.8,167.5" stroke="#262626" stroke-width="2.3"/>
<path d="M1499,117 V109.5 H1508.5 V103.5 H1520 M1528.5,108 V117 H1499" stroke="#333" stroke-width="1.9"/>
<circle cx="1522.8" cy="96" r="13.4" fill="#3d77c9"/>
<path d="M1519.6,92 L1523.8,89 V103.5" stroke="#fff" stroke-width="3" stroke-linejoin="round"/>
<!-- explorer -->
<rect x="1586.2" y="87.5" width="13" height="12.4" fill="#b5d1f0" stroke="#8fb1de" stroke-width="1.5"/>
<path d="M1592.7,100 V106 M1580,106 H1605 M1580,106 V112.5 M1605,106 V112.5 M1592.7,106 V112.5 M1580,115.3 H1605" stroke="#a0a0a0" stroke-width="1.5"/>
<rect x="1576.8" y="112.4" width="6.5" height="5.8" fill="#b5d1f0" stroke="#8fb1de" stroke-width="1.5"/>
<rect x="1589.4" y="112.4" width="6.5" height="5.8" fill="#b5d1f0" stroke="#8fb1de" stroke-width="1.5"/>
<rect x="1601.9" y="112.4" width="6.5" height="5.8" fill="#b5d1f0" stroke="#8fb1de" stroke-width="1.5"/>
<!-- magnifier -->
<path d="M1662.8,104 L1648.3,118.3" stroke="#333" stroke-width="2"/>
<circle cx="1669.3" cy="97.3" r="9" fill="#fff" stroke="#0f4fa0" stroke-width="2.4"/>
<path d="M1650.3,148.8 H1678 L1667,162.5 V172.5 L1661.5,176 V162.5 Z" stroke="#262626" stroke-width="2" stroke-linejoin="round"/>

<!-- ===== Annotate ===== -->
<path d="M1735.5,95.2 H1750.5 M1743,87.2 V103" stroke="#1f5fb0" stroke-width="2"/>
<path d="M1745.5,89 H1761 V107.5 L1754,115 H1737.5 V103.5" stroke="#333" stroke-width="1.9" stroke-linejoin="miter"/>
<path d="M1754,115 V108.2 H1761" stroke="#333" stroke-width="1.6"/>
<polyline points="1743.2,164.5 1749.8,171 1756.4,164.5" stroke="#262626" stroke-width="2.3"/>

<!-- ===== Actions ===== -->
<rect x="1821.2" y="89.3" width="19.4" height="6" fill="#78b2ee"/>
<path d="M1830.5,109.2 H1820.3 V88.4 H1841.5 V100.3 M1820.3,95.6 H1841.5" stroke="#0f4c9c" stroke-width="1.9"/>
<path d="M1832.3,114.6 L1848.3,101.8 V114.6 Z" fill="#eaf5ff"/>
<path d="M1831.2,101.3 V115.5 H1849.4 V101.3" stroke="#333" stroke-width="1.9"/>
<g fill="#5f7fa3"><circle cx="1846.3" cy="103.1" r="1"/><circle cx="1842.1" cy="106.6" r="1"/><circle cx="1846.3" cy="106.6" r="1"/><circle cx="1837.9" cy="110" r="1"/><circle cx="1842.1" cy="110" r="1"/><circle cx="1846.3" cy="110" r="1"/><circle cx="1833.7" cy="113.3" r="1"/><circle cx="1837.9" cy="113.3" r="1"/><circle cx="1842.1" cy="113.3" r="1"/><circle cx="1846.3" cy="113.3" r="1"/></g>
<!-- gear -->
<g transform="translate(1835.5,162)">
<path d="M-2.6,-13.6 H2.6 L3.4,-9.8 L6.6,-8 L10.2,-9.6 L12.8,-5.1 L9.9,-2.6 V2.6 L12.8,5.1 L10.2,9.6 L6.6,8 L3.4,9.8 L2.6,13.6 H-2.6 L-3.4,9.8 L-6.6,8 L-10.2,9.6 L-12.8,5.1 L-9.9,2.6 V-2.6 L-12.8,-5.1 L-10.2,-9.6 L-6.6,-8 L-3.4,-9.8 Z" stroke="#333" stroke-width="1.7" stroke-linejoin="round"/>
<circle r="5" stroke="#1f5fb0" stroke-width="2"/>
</g>
<!-- undo / redo -->
<path d="M1975,91.5 H1992.5 A11.5 11.5 0 0 1 1992.5,114.5 H1973.5" stroke="#8c8c8c" stroke-width="2"/>
<polyline points="1980.5,86 1975,91.5 1980.5,97" stroke="#8c8c8c" stroke-width="2"/>
<path d="M2003,160 H1985.5 A11.5 11.5 0 0 0 1985.5,183.5 H2004" stroke="#8c8c8c" stroke-width="2"/>
<polyline points="1997.5,154.5 2003,160 1997.5,165.5" stroke="#8c8c8c" stroke-width="2"/>
<!-- ruler -->
<path d="M2032.5,114.5 H2024.5 V86 H2055 V93.5" stroke="#262626" stroke-width="2.2"/>
<path d="M2031,86 V89 M2037.5,86 V89 M2044,86 V89 M2050,86 V89 M2024.5,93 H2028 M2024.5,100 H2028 M2024.5,107 H2028" stroke="#262626" stroke-width="1.6"/>
<!-- excel -->
<path d="M2087.6,96.5 V88 H2101.8 L2108,95.2 V117.7 H2099.5" fill="#f9f9f9" stroke="#949494" stroke-width="1.5" stroke-linejoin="round"/>
<path d="M2101.2,88 V96.2 H2108" stroke="#949494" stroke-width="1.5"/>
<rect x="2078" y="97.1" width="21" height="20.6" fill="#79b99b" stroke="#909a95" stroke-width="1.5"/>
<path d="M2083.6,102 L2093.5,112.8 M2093.3,102 L2083.6,112.8" stroke="#f4fffa" stroke-width="2.3"/>
<polyline points="2115.8,99 2122.4,105.5 2129,99" stroke="#939393" stroke-width="2.2"/>
<!-- cloud upload -->
<path d="M2031,181 H2027 Q2022.5,181 2022.5,175 Q2022.5,169.5 2028.5,169 Q2029,159 2038.5,157.5 Q2047,157.5 2048.5,166.5 Q2054.5,166.5 2054.5,174 Q2054.5,181 2048.5,181 H2045.5" stroke="#333" stroke-width="1.8"/>
<path d="M2038.3,185.7 V167.5 M2032.3,173.5 L2038.3,167.5 L2044.3,173.5" stroke="#1254a8" stroke-width="2"/>
<!-- refresh -->
<path d="M2093.3,157 A12.3 12.3 0 1 1 2081.3,166.5" stroke="#0f4c9c" stroke-width="2.6"/>
<path d="M2077.6,164.6 L2084.2,160.8 L2084,168.3 Z" fill="#0f4c9c" stroke="#0f4c9c" stroke-width="1" stroke-linejoin="round"/>
<polyline points="2114.3,165.5 2120.5,172 2126.7,165.5" stroke="#262626" stroke-width="2.5"/>
<!-- collapse chevron -->
<polyline points="2253,208 2263,217.3 2273,208" stroke="#333" stroke-width="1.4"/>

<!-- ===== popup toolbar ===== -->
<path d="M626.8,567 H633.5 M631.5,548.6 H638.3 M635,548.6 L630,567" stroke="#262626" stroke-width="1.5"/>
<path d="M668.6,547.5 V558 Q668.6,564.2 675.9,564.2 Q683.2,564.2 683.2,558 V547.5" stroke="#262626" stroke-width="1.8"/>
<path d="M667.6,568.3 H684.5" stroke="#262626" stroke-width="1.5"/>
<path d="M756.2,545.3 V569" stroke="#cfcfcf" stroke-width="1.3"/>
<rect x="713.5" y="557.6" width="18.6" height="2.8" fill="#262626"/>
<path d="M781.6,568 L791.2,545.8 L800.8,568 M784.8,560.5 H797.6" stroke="#262626" stroke-width="2"/>
<rect x="773.4" y="569.9" width="35.5" height="6.7" fill="#3a3a3a"/>
<polyline points="813.5,554.5 820,561 826.5,554.5" stroke="#555" stroke-width="1.2"/>
<g stroke-linejoin="round">
<path d="M849,556 L859.5,545.8 Q861.5,544 863.5,546.3 Q865,548.5 863,550.5 L853,561.5 L848.5,562 Z" fill="#fff" stroke="#262626" stroke-width="1.6"/>
<path d="M847,559 L841.8,565 L849.2,564.3 Z" fill="#1f5fb0" stroke="#1f5fb0" stroke-width="1.2"/>
</g>
<rect x="834.3" y="570" width="36.4" height="5.8" fill="#fff"/>
<polyline points="874.5,554.5 881,561 887.5,554.5" stroke="#555" stroke-width="1.2"/>
<g stroke="#262626" stroke-width="1.8" stroke-linecap="round">
<path d="M919.7,557.4 A4.9 4.9 0 1 0 925.9,563.4"/>
<path d="M925.7,551.4 A4.9 4.9 0 1 1 931.9,557.4"/>
<path d="M922.9,560.2 L928.3,554.9"/>
</g>
<!-- color circles -->
<circle cx="574.3" cy="713.1" r="13.6" fill="#fff" stroke="#1a1a1a" stroke-width="1.7"/>
<circle cx="574.3" cy="713.1" r="10" fill="#4a93e0"/>
<circle cx="615.6" cy="713.1" r="9.6" fill="#6c6c6c"/>
<circle cx="656.5" cy="713.1" r="9.6" fill="#4f9f4f"/>
<circle cx="697.7" cy="713.1" r="9.6" fill="#c64646"/>
<circle cx="738.6" cy="713.1" r="9.6" fill="#f1d04c"/>
<defs><radialGradient id="rg"><stop offset="0" stop-color="#fff"/><stop offset="1" stop-color="#fff" stop-opacity="0"/></radialGradient></defs>
<g transform="translate(779.7,713.1)">
<path d="M0,0 L0,-9.6 A9.6 9.6 0 0 1 8.3,-4.8 Z" fill="#f3d24a"/>
<path d="M0,0 L8.3,-4.8 A9.6 9.6 0 0 1 8.3,4.8 Z" fill="#9fd34f"/>
<path d="M0,0 L8.3,4.8 A9.6 9.6 0 0 1 0,9.6 Z" fill="#5cc0d8"/>
<path d="M0,0 L0,9.6 A9.6 9.6 0 0 1 -8.3,4.8 Z" fill="#8f8ee6"/>
<path d="M0,0 L-8.3,4.8 A9.6 9.6 0 0 1 -8.3,-4.8 Z" fill="#e78ad0"/>
<path d="M0,0 L-8.3,-4.8 A9.6 9.6 0 0 1 0,-9.6 Z" fill="#f39a6a"/>
<circle r="9.6" fill="url(#rg)"/>
</g>

<!-- ===== footer ===== -->
<polyline points="1212.3,1254.8 1222.5,1264.6 1232.7,1254.8" stroke="#333" stroke-width="1.4"/>
<path d="M2085.5,1261.3 H2102.8" stroke="#262626" stroke-width="1.8"/>
<path d="M2228,1262 H2246.8 M2237.4,1252.6 V1271.3" stroke="#262626" stroke-width="1.8"/>
<rect x="2265" y="1243.7" width="5.5" height="5.5" fill="#cbcbcb"/>
<rect x="2277.7" y="1243.7" width="5.5" height="5.5" fill="#cbcbcb"/>
<rect x="2265" y="1256" width="5.5" height="5.5" fill="#cbcbcb"/>
<rect x="2264.5" y="1266.9" width="8.3" height="7.7" fill="#ee3535"/>
<rect x="2276.6" y="1254.7" width="7.7" height="19.9" fill="#f7ad0a"/>
<rect x="2288.7" y="1242.6" width="8.3" height="32" fill="#52c94d"/>
</svg>

</body></html>
